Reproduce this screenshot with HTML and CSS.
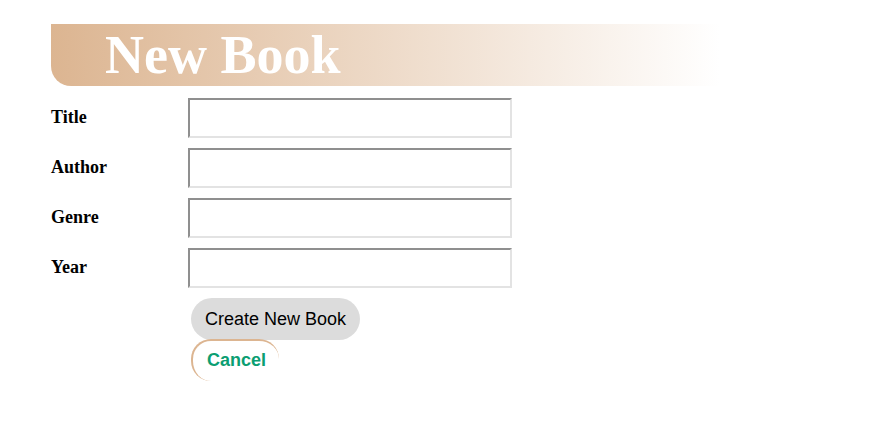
FILE: index.html
```html
<!DOCTYPE html>
<html>
<head>
<meta charset="utf-8">
<link rel="stylesheet" href="styles.css">
</head>
<body>
<div class="page">
  <h1 class="banner">New Book</h1>
  <form class="book-form">
    <div class="row"><label class="label">Title</label><input class="field" type="text"></div>
    <div class="row"><label class="label">Author</label><input class="field" type="text"></div>
    <div class="row"><label class="label">Genre</label><input class="field" type="text"></div>
    <div class="row"><label class="label">Year</label><input class="field" type="text"></div>
    <div class="actions">
      <button class="btn-create" type="button">Create New Book</button>
      <a class="btn-cancel" href="#">Cancel</a>
    </div>
  </form>
</div>
</body>
</html>
```
FILE: styles.css
```css
html, body { margin: 0; padding: 0; background: #fff; }
.page { padding: 24px 0 0 51px; font-family: "Liberation Serif", serif; }
.banner {
  margin: 0;
  width: 669px;
  height: 62px;
  box-sizing: border-box;
  padding-left: 54px;
  font-size: 54px;
  line-height: 62px;
  font-weight: bold;
  color: #fff;
  background: linear-gradient(to right, #dcb591 0%, rgba(220,181,145,0.55) 45%, rgba(220,181,145,0) 100%);
  border-bottom-left-radius: 20px;
}
.book-form { margin-top: 12px; display: flex; flex-direction: column; gap: 10px; }
.row { display: flex; align-items: center; height: 40px; }
.label { width: 137px; font-size: 18px; line-height: 20px; padding-bottom: 2px; font-weight: bold; color: #000; }
.field {
  width: 324px; height: 40px; box-sizing: border-box; margin: 0;
  border-width: 2px;
  border-style: solid;
  border-color: #8f8f8f #e3e3e3 #e3e3e3 #8f8f8f;
  background: #fff;
}
.actions { display: flex; flex-direction: column; align-items: flex-start; padding-left: 140px; }
.btn-create {
  font-family: "Liberation Sans", Arial, sans-serif;
  font-size: 18px;
  height: 42px;
  padding: 0 14px;
  border: none;
  border-radius: 21px;
  background: #dcdcdc;
  color: #000;
  margin: 0;
}
.btn-cancel {
  margin-top: -1px;
  display: inline-block;
  font-family: "Liberation Sans", Arial, sans-serif;
  font-size: 18px;
  font-weight: bold;
  color: #0b9e72;
  text-decoration: none;
  height: 42px;
  line-height: 38px;
  box-sizing: border-box;
  padding: 0 13px 0 14px;
  border-top: 2px solid #dcb591;
  border-left: 2px solid #dcb591;
  border-radius: 20px;
}
```
